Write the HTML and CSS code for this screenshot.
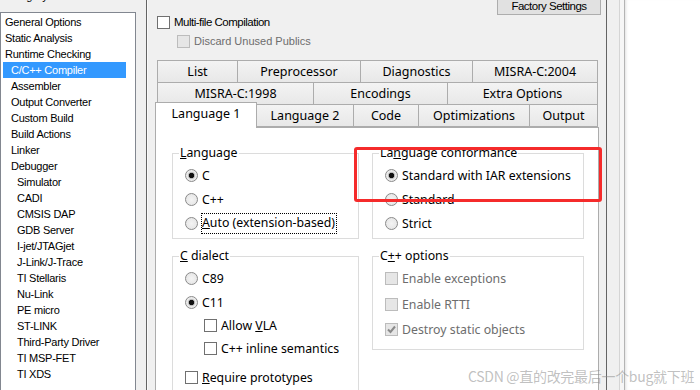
FILE: index.html
```html
<!DOCTYPE html>
<html lang="en">
<head>
    <meta charset="UTF-8">
    <title>Options for node</title>
    <link rel="stylesheet" href="styles.css">
</head>
<body>
    <div class="window">
        <div class="category">
            <div class="category-label">Category:</div>
            <ul class="category-list">
                <li class="lvl0">General Options</li>
                <li class="lvl0">Static Analysis</li>
                <li class="lvl0">Runtime Checking</li>
                <li class="lvl1 selected">C/C++ Compiler</li>
                <li class="lvl1">Assembler</li>
                <li class="lvl1">Output Converter</li>
                <li class="lvl1">Custom Build</li>
                <li class="lvl1">Build Actions</li>
                <li class="lvl1">Linker</li>
                <li class="lvl1">Debugger</li>
                <li class="lvl2">Simulator</li>
                <li class="lvl2">CADI</li>
                <li class="lvl2">CMSIS DAP</li>
                <li class="lvl2">GDB Server</li>
                <li class="lvl2">I-jet/JTAGjet</li>
                <li class="lvl2">J-Link/J-Trace</li>
                <li class="lvl2">TI Stellaris</li>
                <li class="lvl2">Nu-Link</li>
                <li class="lvl2">PE micro</li>
                <li class="lvl2">ST-LINK</li>
                <li class="lvl2">Third-Party Driver</li>
                <li class="lvl2">TI MSP-FET</li>
                <li class="lvl2">TI XDS</li>
            </ul>
        </div>

        <div class="options">
            <div class="top-bar">
                <button class="factory">Factory Settings</button>
            </div>
            <div class="option-row">
                <span class="box"></span>
                <span class="narrow">Multi-file Compilation</span>
            </div>
            <div class="option-row indent disabled">
                <span class="box"></span>
                <span>Discard Unused Publics</span>
            </div>

            <div class="tabs">
                <div class="tab-row">
                    <div class="tab w-list">List</div>
                    <div class="tab w-pre">Preprocessor</div>
                    <div class="tab w-diag">Diagnostics</div>
                    <div class="tab w-m04">MISRA-C:2004</div>
                </div>
                <div class="tab-row">
                    <div class="tab w-m98">MISRA-C:1998</div>
                    <div class="tab w-enc">Encodings</div>
                    <div class="tab w-extra">Extra Options</div>
                </div>
                <div class="tab-row front">
                    <div class="tab active w-lang1">Language 1</div>
                    <div class="tab w-lang2">Language 2</div>
                    <div class="tab w-code">Code</div>
                    <div class="tab w-opt">Optimizations</div>
                    <div class="tab w-out">Output</div>
                </div>
            </div>

            <div class="tab-panel">
                <div class="groups">
                    <fieldset class="group">
                        <legend><u>L</u>anguage</legend>
                        <div class="group-body">
                            <div class="choice"><span class="radio on"></span><span>C</span></div>
                            <div class="choice"><span class="radio"></span><span>C++</span></div>
                            <div class="choice"><span class="radio"></span><span class="focus"><u>A</u>uto (extension-based)</span></div>
                        </div>
                    </fieldset>
                    <fieldset class="group">
                        <legend>La<u>n</u>guage conformance</legend>
                        <div class="group-body">
                            <div class="choice"><span class="radio on"></span><span>Standard with IAR extensions</span></div>
                            <div class="choice"><span class="radio"></span><span>Standard</span></div>
                            <div class="choice"><span class="radio"></span><span>Strict</span></div>
                        </div>
                    </fieldset>
                    <fieldset class="group tall">
                        <legend><u>C</u> dialect</legend>
                        <div class="group-body">
                            <div class="choice"><span class="radio"></span><span>C89</span></div>
                            <div class="choice"><span class="radio on"></span><span>C11</span></div>
                            <div class="choice sub"><span class="box"></span><span>Allow <u>V</u>LA</span></div>
                            <div class="choice sub"><span class="box"></span><span>C++ inline semantics</span></div>
                            <div class="choice spaced"><span class="box"></span><span><u>R</u>equire prototypes</span></div>
                        </div>
                    </fieldset>
                    <fieldset class="group">
                        <legend>C<u>+</u>+ options</legend>
                        <div class="group-body loose">
                            <div class="choice disabled"><span class="box"></span><span>Enable exceptions</span></div>
                            <div class="choice disabled"><span class="box"></span><span>Enable RTTI</span></div>
                            <div class="choice disabled">
                                <span class="box">
                                    <svg width="11" height="11" viewBox="0 0 11 11"><polyline points="2,5.5 4.5,8 9,2.5" fill="none" stroke="#8a8a8a" stroke-width="2"/></svg>
                                </span>
                                <span>Destroy static objects</span>
                            </div>
                        </div>
                    </fieldset>
                </div>
            </div>
        </div>

        <div class="strip"><div class="strip-inner"></div></div>
        <div class="blank"></div>
    </div>

    <div class="annotation"></div>
    <div class="watermark">CSDN @直的改完最后一个bug就下班</div>
</body>
</html>
```

FILE: styles.css
```css
body {
    margin: 0;
    width: 700px;
    height: 390px;
    overflow: hidden;
    position: relative;
    background-color: #ffffff;
    font-family: "Liberation Sans", Arial, sans-serif;
    font-size: 11px;
    color: #000;
}
.window {
    display: flex;
    height: 390px;
}
.category {
    width: 146px;
    background-color: #f0f0f0;
    display: flex;
    flex-direction: column;
}
.category-label {
    margin-top: -11px;
    height: 23px;
    line-height: 14px;
    padding-left: 3px;
    flex: none;
}
.category-list {
    list-style: none;
    margin: 0;
    width: 136px;
    box-sizing: border-box;
    flex: 1;
    min-height: 0;
    overflow: hidden;
    padding: 1px 0 0 2px;
    background-color: #fff;
    border: 1px solid #828790;
    border-bottom: none;
}
.category-list li {
    height: 16px;
    line-height: 16px;
    margin-right: 9px;
    letter-spacing: -0.25px;
    white-space: nowrap;
}
.lvl0 { padding-left: 2px; }
.lvl1 { padding-left: 8px; }
.lvl2 { padding-left: 14px; }
.category-list .selected {
    background-color: #3399ff;
    color: #fff;
}

.options {
    background-color: #f0f0f0;
    border-left: 1px solid #646464;
    box-shadow: inset 1px 0 0 #fafafa;
    padding-left: 8px;
    box-sizing: border-box;
    width: 460px;
    display: flex;
    flex-direction: column;
}
.options > * {
    flex-shrink: 0;
}
.top-bar {
    height: 15px;
    display: flex;
    justify-content: flex-end;
    padding-right: 5px;
}
.factory {
    margin-top: -9px;
    width: 104px;
    height: 24px;
    border: 1px solid #adadad;
    background-color: #e1e1e1;
    font-family: "Liberation Sans", Arial, sans-serif;
    font-size: 11.5px;
    letter-spacing: -0.5px;
    padding: 6px 0 0;
    color: #000;
}
.option-row {
    display: flex;
    align-items: center;
    gap: 4px;
    height: 14px;
    margin-left: 2px;
    margin-bottom: 5px;
}
.option-row.indent {
    margin-left: 22px;
}
.narrow {
    font-size: 11.5px;
    letter-spacing: -0.5px;
}
.box {
    width: 13px;
    height: 13px;
    box-sizing: border-box;
    border: 1px solid #707070;
    background-color: #fff;
    flex: none;
    display: flex;
    align-items: center;
    justify-content: center;
}
.disabled {
    color: #6d6d6d;
}
.disabled .box {
    border-color: #bcbcbc;
    background-color: #e6e6e6;
}

.tabs {
    margin-top: 7px;
    font-family: "Noto Sans", sans-serif;
    font-size: 12.5px;
}
.tab-row {
    display: flex;
    margin-left: 2px;
    margin-bottom: -1px;
}
.tab-row.front {
    margin-left: 0;
}
.tab {
    height: 23px;
    box-sizing: border-box;
    border: 1px solid #acacac;
    margin-left: -1px;
    background: linear-gradient(#f3f3f3, #e8e8e8);
    display: flex;
    align-items: center;
    justify-content: center;
    white-space: nowrap;
    flex: none;
}
.tab:first-child {
    margin-left: 0;
}
.tab.active {
    position: relative;
    z-index: 1;
    margin-top: -2px;
    height: 26px;
    background: #fff;
    border-bottom: none;
    padding-bottom: 4px;
}
.w-list { width: 81px; }
.w-pre { width: 124px; }
.w-diag { width: 113px; }
.w-m04 { width: 126px; }
.w-m98 { width: 157px; }
.w-enc { width: 135px; }
.w-extra { width: 151px; }
.w-lang1 { width: 102px; }
.w-lang2 { width: 98px; }
.w-code { width: 66px; }
.w-opt { width: 112px; }
.w-out { width: 69px; }

.tab-panel {
    width: 444px;
    box-sizing: border-box;
    flex: 1 1 0;
    min-height: 0;
    overflow: hidden;
    background-color: #fff;
    border: 1px solid #acacac;
    border-bottom: none;
    padding: 16px 0 0 16px;
    font-family: "Noto Sans", sans-serif;
    font-size: 12.3px;
}
.groups {
    display: grid;
    grid-template-columns: 187px 212px;
    column-gap: 13px;
    row-gap: 8px;
    align-items: start;
}
.group {
    margin: 0;
    padding: 0 0 3px;
    border: 1px solid #dcdcdc;
    min-width: 0;
}
.group legend {
    margin-left: 6px;
    padding: 0 1px;
    line-height: 18px;
}
.group-body {
    padding: 1px 0 0 12px;
}
.group.tall {
    border-bottom: none;
}
.choice {
    display: flex;
    align-items: center;
    gap: 4px;
    height: 24px;
    white-space: nowrap;
}
.choice.sub {
    height: 23px;
    margin-left: 19px;
}
.choice.spaced {
    height: 23px;
    margin-top: 6px;
}
.loose .choice {
    height: 25.5px;
}
.loose {
    padding-bottom: 3px;
}
.radio {
    width: 13px;
    height: 13px;
    box-sizing: border-box;
    border-radius: 50%;
    border: 1px solid #8a8a8a;
    background: radial-gradient(circle, #f4f4f4 0, #e2e2e2 100%);
    flex: none;
}
.radio.on {
    background: radial-gradient(circle, #111 0, #111 2.3px, #b8b8b8 3px, #e8e8e8 4px, #f4f4f4 100%);
}
.focus {
    outline: 1px dotted #000;
    outline-offset: 0;
    padding: 1px 1px 2px 0;
    line-height: 16px;
}

.strip {
    width: 19px;
    box-sizing: border-box;
    border-left: 1px solid #646464;
    background-color: #f0f0f0;
    padding-left: 12px;
}
.strip-inner {
    height: 100%;
    border-left: 1px solid #d5d5d5;
    border-right: 1px solid #b4b4b4;
    background-color: #f6f6f6;
}
.blank {
    flex: 1;
    background-color: #fff;
    box-shadow: inset 3px 0 3px -2px rgba(0, 0, 0, 0.12);
}

.annotation {
    position: absolute;
    left: 354px;
    top: 147px;
    width: 248px;
    height: 55px;
    box-sizing: border-box;
    border: 3px solid #f52b2b;
    border-radius: 3px;
}
.watermark {
    position: absolute;
    left: 468px;
    top: 366px;
    font-family: "Noto Sans CJK SC", sans-serif;
    font-size: 14px;
    color: rgba(140, 140, 140, 0.55);
    white-space: nowrap;
    letter-spacing: -0.3px;
}
```
